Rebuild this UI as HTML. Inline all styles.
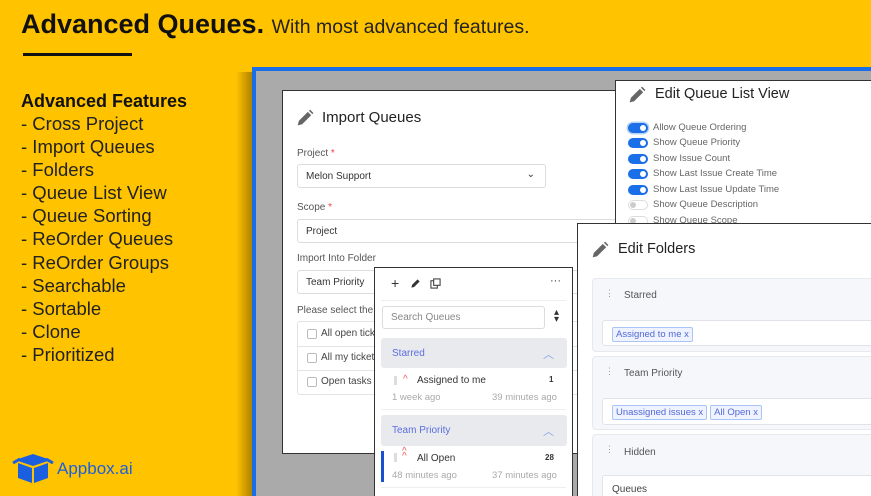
<!DOCTYPE html>
<html><head><meta charset="utf-8"><style>
*{margin:0;padding:0;box-sizing:border-box}
html,body{width:871px;height:496px;overflow:hidden}
body{background:#FFC300;font-family:"Liberation Sans",sans-serif;position:relative;color:#333}
.a{position:absolute}
.t{white-space:nowrap}
.panel{position:absolute;background:#fff;border:1.5px solid #333;overflow:hidden}
.pen{position:absolute}
.lbl{font-size:10px;color:#555}
.inp{position:absolute;border:1px solid #dcdcdc;border-radius:3px;background:#fff;font-size:10px;color:#333;padding-left:8px;display:flex;align-items:center}
.tg{position:absolute;left:12px;width:20px;height:10px;border-radius:5px;background:#1a6ee8}
.tg::after{content:"";position:absolute;right:2px;top:2px;width:6px;height:6px;border-radius:50%;background:#fff}
.tg.off{background:#fff;border:1px solid #ddd}
.tg.off::after{left:1px;right:auto;top:1px;background:#ccc}
.tl{position:absolute;left:37px;font-size:9.5px;color:#666;white-space:nowrap}
.chip{display:inline-block;border:1px solid #a9c4f5;background:#eef3ff;color:#5468d4;font-size:9.5px;padding:1px 3px;margin-right:3px;border-radius:2px}
.fold{position:absolute;left:14px;width:300px;background:#f5f7fb;border:1px solid #e6e9ef;border-radius:4px}
</style></head><body>
<div class="a t" style="left:21px;top:9px;font-size:27px;font-weight:bold;color:#111">Advanced Queues. <span style="font-weight:normal;font-size:19.5px;color:#222">With most advanced features.</span></div>
<div class="a" style="left:23px;top:53px;width:109px;height:3px;background:#111"></div>
<div class="a t" style="left:21px;top:90px;font-size:18px;font-weight:bold;color:#111;line-height:22px">Advanced Features</div>
<div class="a t" style="left:21px;top:112px;font-size:18.5px;color:#222;line-height:23.1px">- Cross Project<br>- Import Queues<br>- Folders<br>- Queue List View<br>- Queue Sorting<br>- ReOrder Queues<br>- ReOrder Groups<br>- Searchable<br>- Sortable<br>- Clone<br>- Prioritized</div>
<svg class="a" style="left:12px;top:452px" width="42" height="32" viewBox="0 0 42 32"><path d="M3 8 L21 2 L39 8 L21 14 Z" fill="#1a5fe0"/><path d="M6 11 L20 16 L20 31 L6 26 Z M36 11 L22 16 L22 31 L36 26 Z" fill="#1a5fe0"/><path d="M1 11 L8 7 M41 11 L34 7" stroke="#1a5fe0" stroke-width="3"/></svg>
<div class="a t" style="left:57px;top:459px;font-size:17px;color:#1a5fe0">Appbox.ai</div>

<div class="a" style="left:236px;top:72px;width:16px;height:424px;background:linear-gradient(90deg,rgba(80,50,0,0),rgba(80,50,0,.45))"></div>
<div class="a" style="left:252px;top:67px;width:619px;height:429px;background:#1a6ee8"></div>
<div class="a" style="left:256px;top:71px;width:615px;height:425px;background:#aaa"></div>

<!-- Import Queues -->
<div class="panel" style="left:282px;top:90px;width:340px;height:364px">
<svg class="pen" style="left:13px;top:18px" width="18" height="18" viewBox="0 0 16 16"><path d="M1.5 14.5 L2.5 10.5 L10.5 2.5 L13.5 5.5 L5.5 13.5 Z M11.5 1.5 L12.5 0.5 L15.5 3.5 L14.5 4.5 Z" fill="#666"/></svg>
<div class="a t" style="left:39px;top:18px;font-size:15px;color:#222">Import Queues</div>
<div class="a t lbl" style="left:14px;top:57px">Project <span style="color:#e44">*</span></div>
<div class="inp" style="left:14px;top:73px;width:249px;height:24px">Melon Support<span style="position:absolute;right:10px;top:4px;font-size:10px">&#8964;</span></div>
<div class="a t lbl" style="left:14px;top:111px">Scope <span style="color:#e44">*</span></div>
<div class="inp" style="left:14px;top:128px;width:340px;height:24px">Project</div>
<div class="a t lbl" style="left:14px;top:162px">Import Into Folder</div>
<div class="inp" style="left:14px;top:179px;width:340px;height:24px">Team Priority</div>
<div class="a t lbl" style="left:14px;top:214px">Please select the q</div>
<div class="a" style="left:14px;top:230px;width:340px;height:74px;border:1px solid #e3e3e3;border-radius:3px"></div>
<div class="a" style="left:14px;top:255px;width:340px;height:1px;background:#e3e3e3"></div>
<div class="a" style="left:14px;top:279px;width:340px;height:1px;background:#e3e3e3"></div>
<div class="a" style="left:24px;top:238px;width:10px;height:10px;border:1px solid #bbb;border-radius:2px"></div>
<div class="a t lbl" style="left:38px;top:237px;color:#444">All open ticke</div>
<div class="a" style="left:24px;top:262px;width:10px;height:10px;border:1px solid #bbb;border-radius:2px"></div>
<div class="a t lbl" style="left:38px;top:261px;color:#444">All my tickets</div>
<div class="a" style="left:24px;top:286px;width:10px;height:10px;border:1px solid #bbb;border-radius:2px"></div>
<div class="a t lbl" style="left:38px;top:285px;color:#444">Open tasks</div>
</div>

<!-- Edit Queue List View -->
<div class="panel" style="left:615px;top:80px;width:260px;height:146px">
<svg class="pen" style="left:12px;top:5px" width="18" height="18" viewBox="0 0 16 16"><path d="M1.5 14.5 L2.5 10.5 L10.5 2.5 L13.5 5.5 L5.5 13.5 Z M11.5 1.5 L12.5 0.5 L15.5 3.5 L14.5 4.5 Z" fill="#666"/></svg>
<div class="a t" style="left:39px;top:5px;font-size:14.5px;color:#222">Edit Queue List View</div>
<div class="tg" style="top:42px;box-shadow:0 0 0 1.5px #b9d2f8"></div><div class="tl" style="top:41px">Allow Queue Ordering</div>
<div class="tg" style="top:57px"></div><div class="tl" style="top:56px">Show Queue Priority</div>
<div class="tg" style="top:73px"></div><div class="tl" style="top:72px">Show Issue Count</div>
<div class="tg" style="top:88px"></div><div class="tl" style="top:87px">Show Last Issue Create Time</div>
<div class="tg" style="top:104px"></div><div class="tl" style="top:103px">Show Last Issue Update Time</div>
<div class="tg off" style="top:119px"></div><div class="tl" style="top:118px">Show Queue Description</div>
<div class="tg off" style="top:135px"></div><div class="tl" style="top:134px">Show Queue Scope</div>
</div>

<!-- Edit Folders -->
<div class="panel" style="left:577px;top:223px;width:300px;height:280px">
<svg class="pen" style="left:13px;top:17px" width="18" height="18" viewBox="0 0 16 16"><path d="M1.5 14.5 L2.5 10.5 L10.5 2.5 L13.5 5.5 L5.5 13.5 Z M11.5 1.5 L12.5 0.5 L15.5 3.5 L14.5 4.5 Z" fill="#666"/></svg>
<div class="a t" style="left:40px;top:17px;font-size:14.5px;color:#222">Edit Folders</div>
<div class="fold" style="top:54px;height:74px">
<div class="a" style="left:12px;top:9px;font-size:9px;color:#999">&#8942;</div>
<div class="a t" style="left:31px;top:11px;font-size:10px;color:#555">Starred</div>
<div class="a" style="left:9px;top:41px;width:290px;height:26px;background:#fff;border:1px solid #e0e3ea;border-radius:3px;padding:3px 9px"><span class="chip">Assigned to me x</span></div>
</div>
<div class="fold" style="top:132px;height:74px">
<div class="a" style="left:12px;top:9px;font-size:9px;color:#999">&#8942;</div>
<div class="a t" style="left:31px;top:11px;font-size:10px;color:#555">Team Priority</div>
<div class="a" style="left:9px;top:41px;width:290px;height:27px;background:#fff;border:1px solid #e0e3ea;border-radius:3px;padding:3px 9px"><span class="chip">Unassigned issues x</span><span class="chip">All Open x</span></div>
</div>
<div class="fold" style="top:210px;height:80px">
<div class="a" style="left:12px;top:9px;font-size:9px;color:#999">&#8942;</div>
<div class="a t" style="left:31px;top:12px;font-size:10px;color:#555">Hidden</div>
<div class="a" style="left:9px;top:40px;width:290px;height:30px;background:#fff;border:1px solid #e0e3ea;border-radius:3px;padding:8px 9px;font-size:10px;color:#444">Queues</div>
</div>
</div>

<!-- Queue list -->
<div class="panel" style="left:374px;top:267px;width:199px;height:240px;background:#fff">
<div class="a t" style="left:16px;top:7px;font-size:14px;color:#333">+</div>
<svg class="a" style="left:35px;top:10px" width="11" height="11" viewBox="0 0 16 16"><path d="M2 14 L3 10 L11 2 L14 5 L6 13 Z" fill="#333"/></svg>
<svg class="a" style="left:55px;top:10px" width="11" height="11" viewBox="0 0 12 12"><rect x="1" y="3" width="7" height="8" fill="none" stroke="#444" stroke-width="1.2"/><rect x="4" y="1" width="7" height="7" fill="#fff" stroke="#444" stroke-width="1.2"/></svg>
<div class="a t" style="left:175px;top:7px;font-size:11px;color:#333">···</div>
<div class="a" style="left:6px;top:32px;width:185px;height:1px;background:#eee"></div>
<div class="inp" style="left:7px;top:38px;width:163px;height:23px;color:#888">Search Queues</div>
<div class="a t" style="left:179px;top:41px;font-size:10px;color:#333;line-height:7px">▴<br>▾</div>
<div class="a" style="left:6px;top:70px;width:186px;height:30px;background:#e9eaee;border-radius:3px"></div>
<div class="a t" style="left:17px;top:80px;font-size:10px;color:#5b6ee0">Starred</div>
<div class="a t" style="left:168px;top:78px;font-size:11px;color:#8aa0e8">︿</div>
<div class="a" style="left:19px;top:108px;width:3px;height:9px;background:#ddd"></div>
<div class="a t" style="left:28px;top:106px;font-size:10px;color:#f05a5a">^</div>
<div class="a t" style="left:42px;top:107px;font-size:10px;color:#333">Assigned to me</div>
<div class="a t" style="left:174px;top:107px;font-size:8px;color:#333;font-weight:bold">1</div>
<div class="a t" style="left:17px;top:124px;font-size:9.5px;color:#aaa">1 week ago</div>
<div class="a t" style="left:117px;top:124px;font-size:9.5px;color:#aaa">39 minutes ago</div>
<div class="a" style="left:6px;top:141px;width:185px;height:1px;background:#eee"></div>
<div class="a" style="left:6px;top:147px;width:186px;height:31px;background:#e9eaee;border-radius:3px"></div>
<div class="a t" style="left:17px;top:157px;font-size:10px;color:#5b6ee0">Team Priority</div>
<div class="a t" style="left:168px;top:155px;font-size:11px;color:#8aa0e8">︿</div>
<div class="a" style="left:6px;top:183px;width:3px;height:31px;background:#1a4fd0"></div>
<div class="a" style="left:19px;top:185px;width:3px;height:9px;background:#ddd"></div>
<div class="a t" style="left:27px;top:181px;font-size:10px;color:#f05a5a;line-height:5px">^<br>^</div>
<div class="a t" style="left:42px;top:185px;font-size:10px;color:#333">All Open</div>
<div class="a t" style="left:170px;top:185px;font-size:8px;color:#333;font-weight:bold">28</div>
<div class="a t" style="left:17px;top:202px;font-size:9.5px;color:#aaa">48 minutes ago</div>
<div class="a t" style="left:117px;top:202px;font-size:9.5px;color:#aaa">37 minutes ago</div>
<div class="a" style="left:6px;top:219px;width:185px;height:1px;background:#eee"></div>
</div>
</body></html>
